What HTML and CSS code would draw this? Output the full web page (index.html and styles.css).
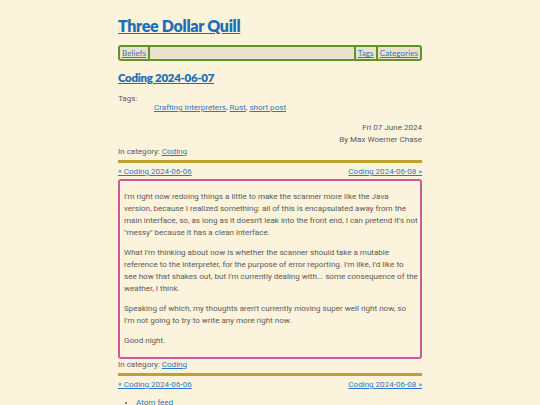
FILE: index.html
```html
<!DOCTYPE html>
<html lang="en">
<head>
<meta charset="utf-8">
<title>Coding 2024-06-07 - Three Dollar Quill</title>
<link rel="stylesheet" href="styles.css">
</head>
<body>
<div class="page">
  <h1 class="site-title"><a href="#">Three Dollar Quill</a></h1>
  <nav class="menu">
    <a class="menu-item first" href="#">Beliefs</a>
    <span class="menu-fill"></span>
    <a class="menu-item" href="#">Tags</a>
    <a class="menu-item" href="#">Categories</a>
  </nav>
  <h2 class="post-title"><a href="#">Coding 2024-06-07</a></h2>
  <dl class="tags">
    <dt>Tags:</dt>
    <dd><a href="#">Crafting Interpreters</a>, <a href="#">Rust</a>, <a href="#">short post</a></dd>
  </dl>
  <div class="meta">
    <div>Fri 07 June 2024</div>
    <div>By Max Woerner Chase</div>
  </div>
  <div class="category">In category: <a href="#">Coding</a></div>
  <hr class="rule">
  <div class="pager"><a href="#">« Coding 2024-06-06</a><a href="#">Coding 2024-06-08 »</a></div>
  <article class="content">
    <p>I'm right now redoing things a little to make the scanner more like the Java version, because I realized something: all of this is encapsulated away from the main interface, so, as long as it doesn't leak into the front end, I can pretend it's not "messy" because it has a clean interface.</p>
    <p>What I'm thinking about now is whether the scanner should take a mutable reference to the interpreter, for the purpose of error reporting. I'm like, I'd like to see how that shakes out, but I'm currently dealing with... some consequence of the weather, I think.</p>
    <p>Speaking of which, my thoughts aren't currently moving super well right now, so I'm not going to try to write any more right now.</p>
    <p>Good night.</p>
  </article>
  <div class="category">In category: <a href="#">Coding</a></div>
  <hr class="rule">
  <div class="pager"><a href="#">« Coding 2024-06-06</a><a href="#">Coding 2024-06-08 »</a></div>
  <ul class="feeds">
    <li><a href="#">Atom feed</a></li>
  </ul>
</div>
</body>
</html>
```
FILE: styles.css
```css
html, body {
  margin: 0;
  padding: 0;
  background: #fcf3dc;
}
body {
  font-family: "Roboto", "DejaVu Sans", sans-serif;
  font-size: 8.05px;
  line-height: 12px;
  color: #5a5a5a;
}
a {
  color: #2b78c2;
}
.page {
  width: 304px;
  margin: 0 auto;
  padding-top: 16px;
}
.site-title {
  margin: 0;
  font-family: "Lato", sans-serif;
  font-weight: 800;
  font-size: 16px;
  letter-spacing: -0.3px;
  line-height: 20px;
}
.site-title a {
  color: #1c6fb6;
}
.menu {
  margin-top: 9px;
  display: flex;
  align-items: stretch;
  height: 12px;
  border: 2px solid #5f9325;
  border-radius: 3px;
  background: #e9e3cd;
  font-family: "Lato", sans-serif;
  font-size: 8.2px;
  line-height: 12px;
}
.menu-item {
  padding: 0 2px;
  border-left: 2px solid #5f9325;
  color: #3a78b8;
}
.menu-item.first {
  border-left: 0;
  border-right: 2px solid #5f9325;
}
.menu-fill {
  flex: 1;
}
.post-title {
  margin: 9px 0 0;
  font-family: "Lato", sans-serif;
  font-weight: 800;
  font-size: 11.5px;
  letter-spacing: -0.3px;
  line-height: 16px;
}
.post-title a {
  color: #1c6fb6;
}
.tags {
  margin: 9px 0 0;
}
.tags dt {
  line-height: 7px;
}
.tags dd {
  margin: 0 0 0 36px;
}
.meta {
  margin-top: 8px;
  text-align: right;
}
.rule {
  margin: 2px 0 3px;
  height: 0;
  border: 0;
  border-top: 3px solid #c0a030;
}
.pager {
  display: flex;
  justify-content: space-between;
}
.content {
  margin-top: 1px;
  border: 2px solid #c95a9e;
  border-radius: 3px;
  padding: 2px 2px 2px 4px;
}
.content p {
  margin: 8px 0;
}
.feeds {
  margin: 6px 0 0;
  padding-left: 18px;
}
```
